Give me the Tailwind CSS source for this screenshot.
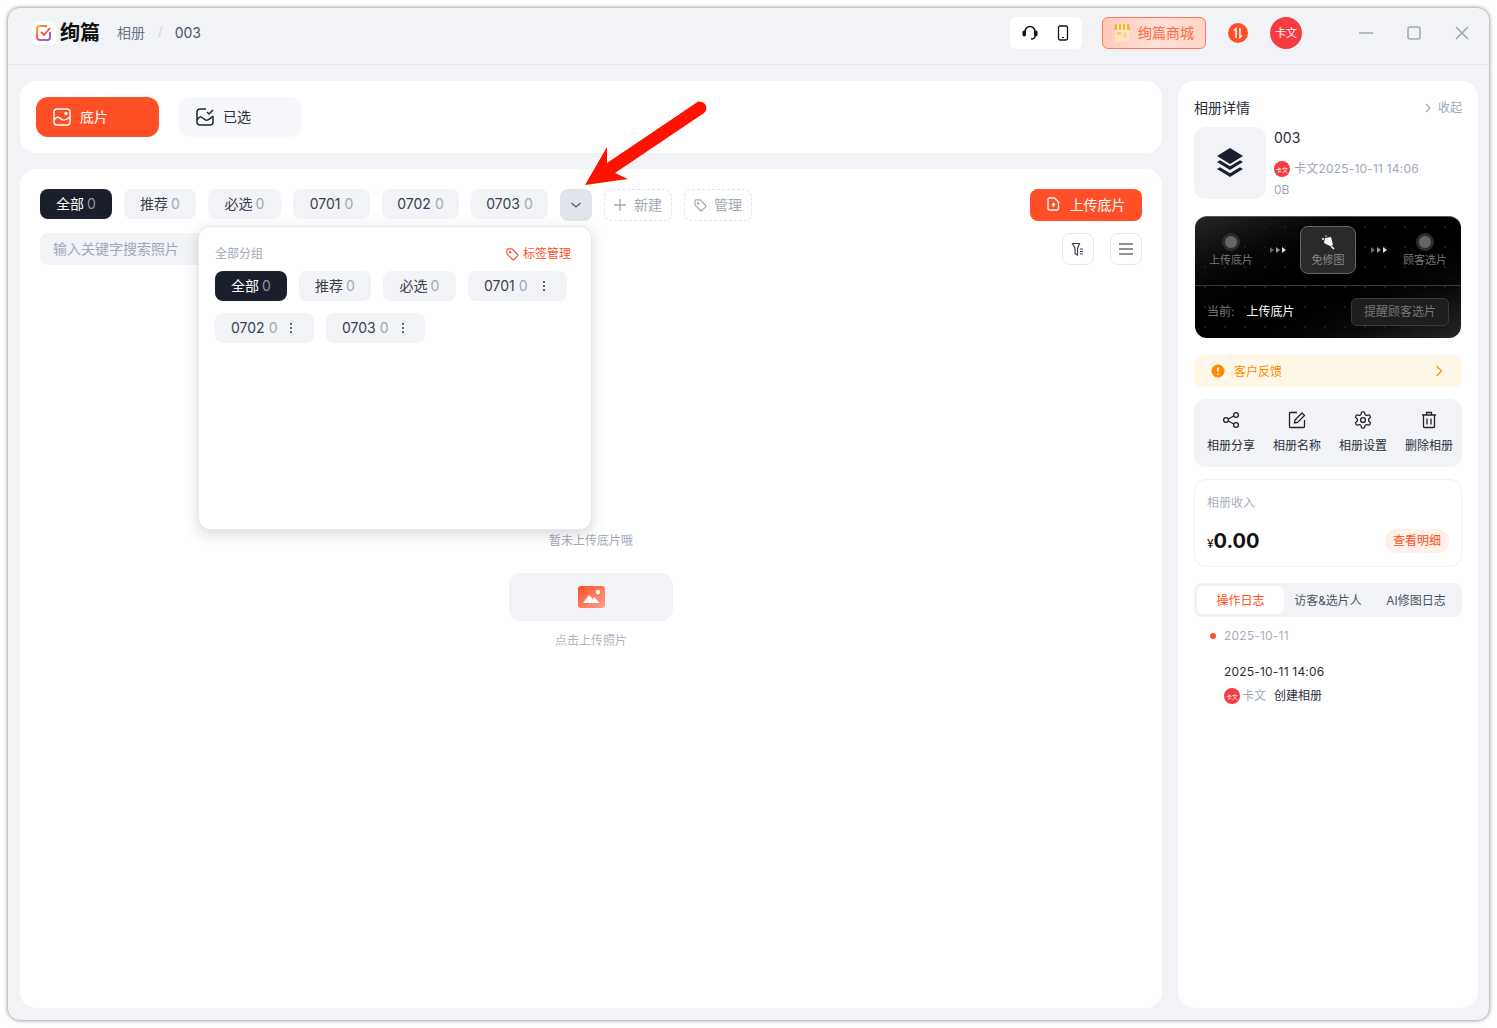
<!DOCTYPE html>
<html lang="en">
<head>
  <meta charset="UTF-8" />
  <title>绚篇 相册</title>
  <script src="https://cdn.jsdelivr.net/npm/@tailwindcss/browser@4"></script>
</head>
<body class="bg-white h-[1028px] w-[1497px] overflow-hidden font-['Inter','Noto_Sans_CJK_SC',sans-serif] text-[#1a1f2b]">
  <div class="relative mx-[8px] mt-[8px] w-[1481px] h-[1012px] bg-[#f2f3f7] rounded-[12px] shadow-[0_0_4px_rgba(0,0,0,0.55)] overflow-hidden">

    <!-- Title bar -->
    <div class="h-[57px] border-b border-[#e4e6eb] flex items-center pl-[24px] pb-[6px]">
      <div class="w-[24px] h-[24px] bg-white rounded-md flex items-center justify-center">
        <svg width="18" height="18" viewBox="0 0 18 18" fill="none">
          <defs><linearGradient id="lg" x1="0" y1="0" x2="1" y2="1"><stop offset="0" stop-color="#ffb020"/><stop offset=".5" stop-color="#ff4d5e"/><stop offset="1" stop-color="#8a5cf6"/></linearGradient></defs>
          <path d="M15 8v5a3 3 0 0 1-3 3H5a3 3 0 0 1-3-3V5a3 3 0 0 1 3-3h7" stroke="url(#lg)" stroke-width="2"/>
          <path d="M6 8l3 3 6-7" stroke="#ff4d30" stroke-width="1.8"/>
        </svg>
      </div>
      <span class="ml-[4px] text-[20px] font-bold text-[#111] leading-none">绚篇</span>
      <span class="ml-[17px] text-[14px] text-[#6b7484] -translate-y-px">相册</span>
      <span class="ml-[13px] text-[13px] text-[#cdd1d9] -translate-y-px">/</span>
      <span class="ml-[12px] text-[14px] text-[#4b5362] -translate-y-px">003</span>

      <div class="ml-auto flex items-center">
        <div class="w-[72px] h-[32px] bg-white rounded-md flex items-center justify-center gap-[17px]">
          <svg width="16" height="16" viewBox="0 0 16 16" fill="none"><path d="M3 8V6.500a5 5 0 0 1 10 0V8" stroke="#111" stroke-width="1.500"/><rect x="0.500" y="5.500" width="3.500" height="6" rx="1.700" fill="#111"/><rect x="12" y="5.500" width="3.500" height="6" rx="1.700" fill="#111"/><path d="M13 11c0 2-2 3-4 3" stroke="#111" stroke-width="1.400"/></svg>
          <svg width="16" height="16" viewBox="0 0 16 16" fill="none"><rect x="3.500" y="1" width="9" height="14" rx="1.500" stroke="#111" stroke-width="1.300"/><path d="M7 12.500h2" stroke="#111" stroke-width="1.200"/></svg>
        </div>
        <div class="ml-[20px] w-[104px] h-[32px] rounded-md border border-[#ff7a5c] bg-gradient-to-r from-[#ffc9b8] via-[#ffe0d6] to-[#ffd5c8] flex items-center pl-[10px] gap-[7px]">
          <svg width="18" height="20" viewBox="0 0 18 20" fill="none"><rect x="2" y="6" width="14" height="13" fill="#fde6bf"/><rect x="4" y="9" width="4" height="3" fill="#f8c98a"/><rect x="10" y="9" width="4" height="6" fill="#f8d7a8"/><path d="M2 1h14l1 6H1z" fill="#f5b335"/><path d="M5 1v6M9 1v6M13 1v6" stroke="#fff" stroke-width="1.400"/></svg>
          <span class="text-[14px] text-[#ff6a45] leading-none">绚篇商城</span>
        </div>
        <div class="ml-[22px] w-[20px] h-[20px] rounded-full bg-[#ff4f26] flex items-center justify-center">
          <svg width="12" height="12" viewBox="0 0 12 12" fill="none" stroke="#fff" stroke-width="1.500"><path d="M4 11V1.500L2 3.500"/><path d="M8 1v9.500l2-2"/></svg>
        </div>
        <div class="ml-[22px] w-[32px] h-[32px] rounded-full bg-[#f63c42] flex items-center justify-center text-[11px] text-white">卡文</div>
        <div class="ml-[57px] mr-[20px] flex items-center gap-[34px]">
          <svg width="14" height="14" viewBox="0 0 14 14" fill="none" stroke="#a0a8b6" stroke-width="1.600"><path d="M0 7h14"/></svg>
          <svg width="14" height="14" viewBox="0 0 14 14" fill="none" stroke="#a0a8b6" stroke-width="1.600"><rect x="1" y="1" width="12" height="12" rx="2"/></svg>
          <svg width="14" height="14" viewBox="0 0 14 14" fill="none" stroke="#a0a8b6" stroke-width="1.600"><path d="M1 1l12 12M13 1L1 13"/></svg>
        </div>
      </div>
    </div>

    <div class="flex pl-[12px] pr-[11px] pt-[16px] gap-[16px]">
      <!-- Left column -->
      <div class="w-[1142px] shrink-0 flex flex-col gap-[16px]">
        <div class="h-[72px] bg-white rounded-2xl flex items-center px-[16px] gap-[20px]">
          <div class="w-[123px] h-[40px] pb-[2px] bg-[#ff4f26] rounded-xl flex items-center pl-[17px] gap-[9px] text-white text-[14px]">
            <svg class="mt-[2px]" width="18" height="18" viewBox="0 0 18 18" fill="none" stroke="#fff" stroke-width="1.400"><rect x="1" y="1" width="16" height="16" rx="3"/><path d="M1 12c3-4 5-3 7-1s4 2 9-2"/><circle cx="13" cy="5.500" r="1" fill="#fff"/></svg>
            底片
          </div>
          <div class="w-[123px] h-[40px] pb-[2px] bg-[#f7f8fc] rounded-xl flex items-center pl-[17px] gap-[9px] text-[#2a2f3a] text-[14px]">
            <svg class="mt-[2px]" width="18" height="18" viewBox="0 0 18 18" fill="none" stroke="#1f2633" stroke-width="1.500"><path d="M10 1H4a3 3 0 0 0-3 3v10a3 3 0 0 0 3 3h10a3 3 0 0 0 3-3V8"/><path d="M1 12c3-5 5-3 7-1s4 2 9-3"/><path d="M11 4l2 2 4-4"/></svg>
            已选
          </div>
        </div>

        <div class="relative h-[839px] bg-white rounded-2xl p-[20px]">
          <div class="flex items-start gap-[12px] text-[14px]">
            <div class="w-[72px] h-[30px] pb-[2px] rounded-lg bg-[#1a1f2b] text-white flex items-center justify-center gap-[3px]">全部 <span class="text-[#8e97a8]">0</span></div>
            <div class="w-[72px] h-[30px] pb-[2px] rounded-lg bg-[#f2f3f7] flex items-center justify-center gap-[3px] text-[#3a404c]">推荐 <span class="text-[#a0a8b6]">0</span></div>
            <div class="w-[73px] h-[30px] pb-[2px] rounded-lg bg-[#f2f3f7] flex items-center justify-center gap-[3px] text-[#3a404c]">必选 <span class="text-[#a0a8b6]">0</span></div>
            <div class="w-[77px] h-[30px] pb-[2px] rounded-lg bg-[#f2f3f7] flex items-center justify-center gap-[4px] text-[#3a404c]">0701 <span class="text-[#a0a8b6]">0</span></div>
            <div class="w-[77px] h-[30px] pb-[2px] rounded-lg bg-[#f2f3f7] flex items-center justify-center gap-[4px] text-[#3a404c]">0702 <span class="text-[#a0a8b6]">0</span></div>
            <div class="w-[77px] h-[30px] pb-[2px] rounded-lg bg-[#f2f3f7] flex items-center justify-center gap-[4px] text-[#3a404c]">0703 <span class="text-[#a0a8b6]">0</span></div>
            <div class="w-[32px] h-[32px] rounded-lg bg-[#e1e4ea] flex items-center justify-center">
              <svg width="12" height="12" viewBox="0 0 12 12" fill="none" stroke="#4b5362" stroke-width="1.100"><path d="M1.500 4l4.500 4 4.500-4"/></svg>
            </div>
            <div class="w-[68px] h-[32px] pb-[2px] rounded-lg border border-dashed border-[#e1e4ea] flex items-center justify-center gap-[8px] text-[#a0a8b6]">
              <svg class="mt-[2px]" width="12" height="12" viewBox="0 0 12 12" fill="none" stroke="#a0a8b6" stroke-width="1.300"><path d="M6 0v12M0 6h12"/></svg>
              新建
            </div>
            <div class="w-[68px] h-[32px] pb-[2px] rounded-lg border border-dashed border-[#e1e4ea] flex items-center justify-center gap-[7px] text-[#a0a8b6]">
              <svg class="mt-[2px]" width="13" height="13" viewBox="0 0 14 14" fill="none" stroke="#a0a8b6" stroke-width="1.200"><path d="M1 2a1 1 0 0 1 1-1h4.500l6 6a1 1 0 0 1 0 1.400l-4 4a1 1 0 0 1-1.400 0l-6-6z"/><circle cx="4.500" cy="4.500" r=".8"/></svg>
              管理
            </div>
            <div class="ml-auto w-[112px] h-[32px] pb-[2px] rounded-lg bg-[#ff4f26] text-white flex items-center justify-center gap-[10px]">
              <svg width="13" height="14" viewBox="0 0 13 14" fill="none" stroke="#fff" stroke-width="1.300"><path d="M2.500 1h5l4 4v6.500a1.500 1.500 0 0 1-1.500 1.500H2.500A1.500 1.500 0 0 1 1 11.500v-9A1.500 1.500 0 0 1 2.500 1z"/><path d="M6.500 10V6.500M5 8l1.500-1.500L8 8"/></svg>
              上传底片
            </div>
          </div>

          <div class="mt-[12px] flex items-start">
            <div class="w-[180px] h-[32px] pb-[2px] rounded-lg bg-[#f2f3f7] flex items-center pl-[13px] text-[14px] text-[#a0a8b6]">输入关键字搜索照片</div>
            <div class="ml-auto w-[32px] h-[32px] rounded-lg border border-[#e6e8ed] flex items-center justify-center">
              <svg width="14" height="14" viewBox="0 0 14 14" fill="none" stroke="#3a404c" stroke-width="1.200"><path d="M1.500 1.500h7L6.500 6.500V13L4 11.500v-5z"/><path d="M9 7h3M9 9.500h3M9 12h3"/></svg>
            </div>
            <div class="ml-[16px] w-[32px] h-[32px] rounded-lg border border-[#e6e8ed] flex items-center justify-center">
              <svg width="14" height="12" viewBox="0 0 14 12" fill="none" stroke="#222" stroke-width="1.200"><path d="M0 1h14M0 6h14M0 11h14"/></svg>
            </div>
          </div>

          <!-- Empty state -->
          <div class="mt-[268px] flex flex-col items-center">
            <div class="text-[12px] leading-[16px] text-[#a0a8b6]">暂未上传底片哦</div>
            <div class="mt-[24px] w-[164px] h-[48px] rounded-xl bg-[#f2f3f7] flex items-center justify-center">
              <svg width="27" height="22" viewBox="0 0 27 22" fill="none">
                <defs><linearGradient id="pg" x1="0" y1="0" x2="1" y2="1"><stop offset="0" stop-color="#ff4f26"/><stop offset="1" stop-color="#ffa08a"/></linearGradient></defs>
                <rect width="27" height="22" rx="3" fill="url(#pg)"/>
                <circle cx="20" cy="6" r="2.200" fill="#fff"/>
                <path d="M5 17l6-8 3.500 4 2-2 5 6z" fill="#fff"/>
              </svg>
            </div>
            <div class="mt-[10px] text-[12px] leading-[16px] text-[#b0b6c2] translate-y-[2px]">点击上传照片</div>
          </div>

          <!-- Tag dropdown -->
          <div class="absolute left-[178px] top-[57px] w-[394px] h-[304px] bg-white rounded-xl border border-[#e6e8ed] shadow-[0_4px_14px_rgba(0,0,0,0.16)] pt-[18px] pl-[16px] pr-[20px]">
            <div class="flex items-center justify-between h-[18px]">
              <span class="text-[12px] text-[#a0a8b6]">全部分组</span>
              <span class="flex items-center gap-[4px] text-[12px] text-[#ff4f26]">
                <svg width="13" height="13" viewBox="0 0 14 14" fill="none" stroke="#ff4f26" stroke-width="1.200"><path d="M1 2a1 1 0 0 1 1-1h4.500l6 6a1 1 0 0 1 0 1.400l-4 4a1 1 0 0 1-1.400 0l-6-6z"/><circle cx="4.500" cy="4.500" r=".8"/></svg>
                标签管理
              </span>
            </div>
            <div class="mt-[8px] flex flex-wrap gap-[12px] text-[14px]">
              <div class="w-[72px] h-[30px] pb-[2px] rounded-lg bg-[#1a1f2b] text-white flex items-center justify-center gap-[3px]">全部 <span class="text-[#8e97a8]">0</span></div>
              <div class="w-[72px] h-[30px] pb-[2px] rounded-lg bg-[#f2f3f7] flex items-center justify-center gap-[3px] text-[#3a404c]">推荐 <span class="text-[#a0a8b6]">0</span></div>
              <div class="w-[73px] h-[30px] pb-[2px] rounded-lg bg-[#f2f3f7] flex items-center justify-center gap-[3px] text-[#3a404c]">必选 <span class="text-[#a0a8b6]">0</span></div>
              <div class="w-[99px] h-[30px] pb-[2px] rounded-lg bg-[#f2f3f7] flex items-center pl-[16px] gap-[4px] text-[#3a404c]">0701 <span class="text-[#a0a8b6]">0</span>
                <svg class="ml-[10px] mt-[2px]" width="4" height="12" viewBox="0 0 4 12" fill="#3a404c"><circle cx="2" cy="2" r="1.100"/><circle cx="2" cy="6" r="1.100"/><circle cx="2" cy="10" r="1.100"/></svg>
              </div>
              <div class="w-[99px] h-[30px] pb-[2px] rounded-lg bg-[#f2f3f7] flex items-center pl-[16px] gap-[4px] text-[#3a404c]">0702 <span class="text-[#a0a8b6]">0</span>
                <svg class="ml-[8px] mt-[2px]" width="4" height="12" viewBox="0 0 4 12" fill="#3a404c"><circle cx="2" cy="2" r="1.100"/><circle cx="2" cy="6" r="1.100"/><circle cx="2" cy="10" r="1.100"/></svg>
              </div>
              <div class="w-[99px] h-[30px] pb-[2px] rounded-lg bg-[#f2f3f7] flex items-center pl-[16px] gap-[4px] text-[#3a404c]">0703 <span class="text-[#a0a8b6]">0</span>
                <svg class="ml-[8px] mt-[2px]" width="4" height="12" viewBox="0 0 4 12" fill="#3a404c"><circle cx="2" cy="2" r="1.100"/><circle cx="2" cy="6" r="1.100"/><circle cx="2" cy="10" r="1.100"/></svg>
              </div>
            </div>
          </div>
        </div>
      </div>

      <!-- Right panel -->
      <div class="w-[300px] shrink-0 h-[927px] bg-white rounded-2xl px-[16px] pt-[18px]">
        <div class="flex items-center justify-between h-[18px]">
          <span class="text-[14px] text-[#2a2f3a] -translate-y-px">相册详情</span>
          <span class="flex items-center gap-[6px] text-[12px] text-[#a0a8b6]">
            <svg width="8" height="10" viewBox="0 0 8 10" fill="none" stroke="#a0a8b6" stroke-width="1.100"><path d="M2 1l4 4-4 4"/></svg>
            收起
          </span>
        </div>
        <div class="mt-[10px] flex">
          <div class="w-[72px] h-[72px] rounded-xl bg-[#f2f3f7] flex items-center justify-center">
            <svg width="28" height="30" viewBox="0 0 28 30" fill="#1a1f2b"><path d="M14 0l13 8-13 8L1 8z"/><path d="M1 14l3-1.800 10 6 10-6 3 1.800-13 8z"/><path d="M1 21l3-1.800 10 6 10-6 3 1.800-13 8z"/></svg>
          </div>
          <div class="ml-[8px]">
            <div class="text-[14px] leading-[22px] text-[#2a2f3a]">003</div>
            <div class="mt-[12px] flex items-center h-[16px] text-[12px] text-[#a0a8b6] tracking-[0.2px]">
              <span class="w-[16px] h-[16px] rounded-full bg-[#f63c42] text-white text-[6px] flex items-center justify-center mr-[4px]">卡文</span>
              卡文2025-10-11 14:06
            </div>
            <div class="mt-[5px] text-[12px] leading-[16px] text-[#a0a8b6]">0B</div>
          </div>
        </div>

        <!-- Workflow card -->
        <div class="relative mt-[17px] mx-[1px] h-[122px] rounded-xl bg-gradient-to-br from-[#262626] via-black to-[#262626] border-t border-[#555] overflow-hidden">
          <div class="absolute inset-0 bg-[radial-gradient(#1c1c1c_1px,transparent_1px)] bg-[size:20px_20px]"></div>
          <div class="relative h-[69px] border-b border-[#3a3a3a] flex items-start pt-[9px] pl-[13px] text-[11px] text-[#777]">
            <div class="w-[46px] flex flex-col items-center pt-[10px]">
              <span class="w-[12px] h-[12px] rounded-full bg-[#666] ring-[3px] ring-[#2c2c2c]"></span>
              <span class="mt-[5px] leading-[14px] whitespace-nowrap">上传底片</span>
            </div>
            <svg class="ml-[16px] mt-[20px]" width="18" height="8" viewBox="0 0 18 8"><path d="M0 1l4 3-4 3z" fill="#666"/><path d="M6 1l4 3-4 3z" fill="#999"/><path d="M12 1l4 3-4 3z" fill="#ddd"/></svg>
            <div class="ml-[12px] w-[56px] h-[48px] rounded-lg border border-[#666] bg-[#2a2a2a] flex flex-col items-center pt-[8px]">
              <svg width="16" height="16" viewBox="0 0 16 16" fill="#fff"><path d="M5 3l6-1 2 8-3 1-6-3z"/><path d="M11 11l3 3" stroke="#fff" stroke-width="1.500"/><circle cx="3" cy="4" r="1"/><circle cx="6" cy="1" r=".7"/></svg>
              <span class="mt-[2px] leading-[14px] text-[#8a8a8a]">免修图</span>
            </div>
            <svg class="ml-[15px] mt-[20px]" width="18" height="8" viewBox="0 0 18 8"><path d="M0 1l4 3-4 3z" fill="#666"/><path d="M6 1l4 3-4 3z" fill="#999"/><path d="M12 1l4 3-4 3z" fill="#ddd"/></svg>
            <div class="ml-[13px] w-[46px] flex flex-col items-center pt-[10px]">
              <span class="w-[12px] h-[12px] rounded-full bg-[#666] ring-[3px] ring-[#2c2c2c]"></span>
              <span class="mt-[5px] leading-[14px] whitespace-nowrap">顾客选片</span>
            </div>
          </div>
          <div class="relative flex items-center h-[52px] pl-[12px] pr-[12px] text-[12px]">
            <span class="text-[#777]">当前:</span>
            <span class="ml-[12px] text-white">上传底片</span>
            <span class="ml-auto w-[98px] h-[28px] rounded-md border border-[#3a3a3a] bg-[#1e1e1e] text-[#777] flex items-center justify-center">提醒顾客选片</span>
          </div>
        </div>

        <div class="mt-[17px] h-[32px] rounded-lg bg-[#fff7e8] flex items-center pl-[17px] pr-[19px] text-[12px] text-[#ff8a00]">
          <svg width="14" height="14" viewBox="0 0 14 14"><circle cx="7" cy="7" r="6.500" fill="#ff8a00"/><path d="M7 3.500v4.200M7 9.500v1.200" stroke="#fff" stroke-width="1.600"/></svg>
          <span class="ml-[9px] translate-y-[1px]">客户反馈</span>
          <svg class="ml-auto" width="8" height="12" viewBox="0 0 8 12" fill="none" stroke="#ff8a00" stroke-width="1.200"><path d="M1.500 1l5 5-5 5"/></svg>
        </div>

        <div class="mt-[12px] h-[68px] rounded-xl bg-[#f2f3f7] grid grid-cols-[repeat(4,66px)] pt-[12px] pl-[4px] text-[12px] text-[#2a2f3a]">
          <div class="flex flex-col items-center gap-[8px]">
            <svg width="18" height="18" viewBox="0 0 18 18" fill="none" stroke="#222" stroke-width="1.300"><circle cx="14" cy="4" r="2.400"/><circle cx="14" cy="14" r="2.400"/><circle cx="4" cy="9" r="2.400"/><path d="M6.200 8l5.600-3M6.200 10l5.600 3"/></svg>
            相册分享
          </div>
          <div class="flex flex-col items-center gap-[8px]">
            <svg width="18" height="18" viewBox="0 0 18 18" fill="none" stroke="#222" stroke-width="1.300"><path d="M9 1.500H2.500a1 1 0 0 0-1 1v13a1 1 0 0 0 1 1h13a1 1 0 0 0 1-1V9"/><path d="M6.500 12l.5-3L14 2l2.500 2.500-7 7z"/></svg>
            相册名称
          </div>
          <div class="flex flex-col items-center gap-[8px]">
            <svg width="18" height="18" viewBox="1 1 22 22" fill="none" stroke="#222" stroke-width="1.600"><path d="M12.220 2h-.44a2 2 0 0 0-2 2v.18a2 2 0 0 1-1 1.730l-.43.25a2 2 0 0 1-2 0l-.15-.08a2 2 0 0 0-2.730.73l-.22.38a2 2 0 0 0 .73 2.730l.15.1a2 2 0 0 1 1 1.720v.51a2 2 0 0 1-1 1.740l-.15.09a2 2 0 0 0-.73 2.730l.22.38a2 2 0 0 0 2.730.73l.15-.08a2 2 0 0 1 2 0l.43.25a2 2 0 0 1 1 1.730V20a2 2 0 0 0 2 2h.44a2 2 0 0 0 2-2v-.18a2 2 0 0 1 1-1.730l.43-.25a2 2 0 0 1 2 0l.15.08a2 2 0 0 0 2.730-.73l.22-.39a2 2 0 0 0-.73-2.730l-.15-.08a2 2 0 0 1-1-1.740v-.5a2 2 0 0 1 1-1.740l.15-.09a2 2 0 0 0 .73-2.730l-.22-.38a2 2 0 0 0-2.730-.73l-.15.08a2 2 0 0 1-2 0l-.43-.25a2 2 0 0 1-1-1.730V4a2 2 0 0 0-2-2z"/><circle cx="12" cy="12" r="3"/></svg>
            相册设置
          </div>
          <div class="flex flex-col items-center gap-[8px]">
            <svg width="18" height="18" viewBox="0 0 18 18" fill="none" stroke="#222" stroke-width="1.300"><path d="M2 4h14M6.500 4V1.500h5V4M3.500 4v11.500a1 1 0 0 0 1 1h9a1 1 0 0 0 1-1V4M7 7.500v6M11 7.500v6"/></svg>
            删除相册
          </div>
        </div>

        <div class="mt-[12px] h-[88px] rounded-xl border border-[#f0f1f4] px-[12px] pt-[14px]">
          <div class="text-[12px] leading-[18px] text-[#a8afbc]">相册收入</div>
          <div class="mt-[12px] flex items-center justify-between">
            <span class="font-bold text-[#111] text-[20px] leading-[30px] translate-y-[2px]"><span class="text-[12px] font-normal">¥</span>0.00</span>
            <span class="w-[64px] h-[24px] rounded-full bg-[#fff0ea] text-[12px] text-[#ff4f26] flex items-center justify-center">查看明细</span>
          </div>
        </div>

        <div class="mt-[16px] h-[34px] pt-[2px] rounded-lg bg-[#f2f3f7] flex items-center pl-[3px] text-[12px] text-[#4b5362]">
          <span class="w-[87px] h-[28px] -mt-[2px] pt-[2px] rounded-md bg-white text-[#ff4f26] flex items-center justify-center">操作日志</span>
          <span class="w-[88px] text-center whitespace-nowrap">访客&amp;选片人</span>
          <span class="w-[88px] text-center whitespace-nowrap">AI修图日志</span>
        </div>

        <div class="mt-[11px] pl-[16px] text-[12px]">
          <div class="flex items-center h-[16px]">
            <span class="w-[6px] h-[6px] rounded-full bg-[#ff4f26]"></span>
            <span class="ml-[8px] text-[#a8afbc] tracking-[0.2px]">2025-10-11</span>
          </div>
          <div class="mt-[20px] ml-[14px] leading-[16px] text-[#2a2f3a] tracking-[0.2px]">2025-10-11 14:06</div>
          <div class="mt-[8px] ml-[14px] flex items-center h-[16px]">
            <span class="w-[16px] h-[16px] rounded-full bg-[#f63c42] text-white text-[6px] flex items-center justify-center mr-[2px]">卡文</span>
            <span class="text-[#a0a8b6]">卡文</span>
            <span class="ml-[8px] text-[#2a2f3a]">创建相册</span>
          </div>
        </div>
      </div>
    </div>

    <!-- Red annotation arrow -->
    <svg class="absolute left-[570px] top-[90px]" width="140" height="100" viewBox="0 0 140 100" fill="none">
      <path d="M7 87L29 49L29 65L118 5A6 6 0 0 1 126 15L37 75L50 81z" fill="#ff1200"/>
    </svg>
  </div>
</body>
</html>
